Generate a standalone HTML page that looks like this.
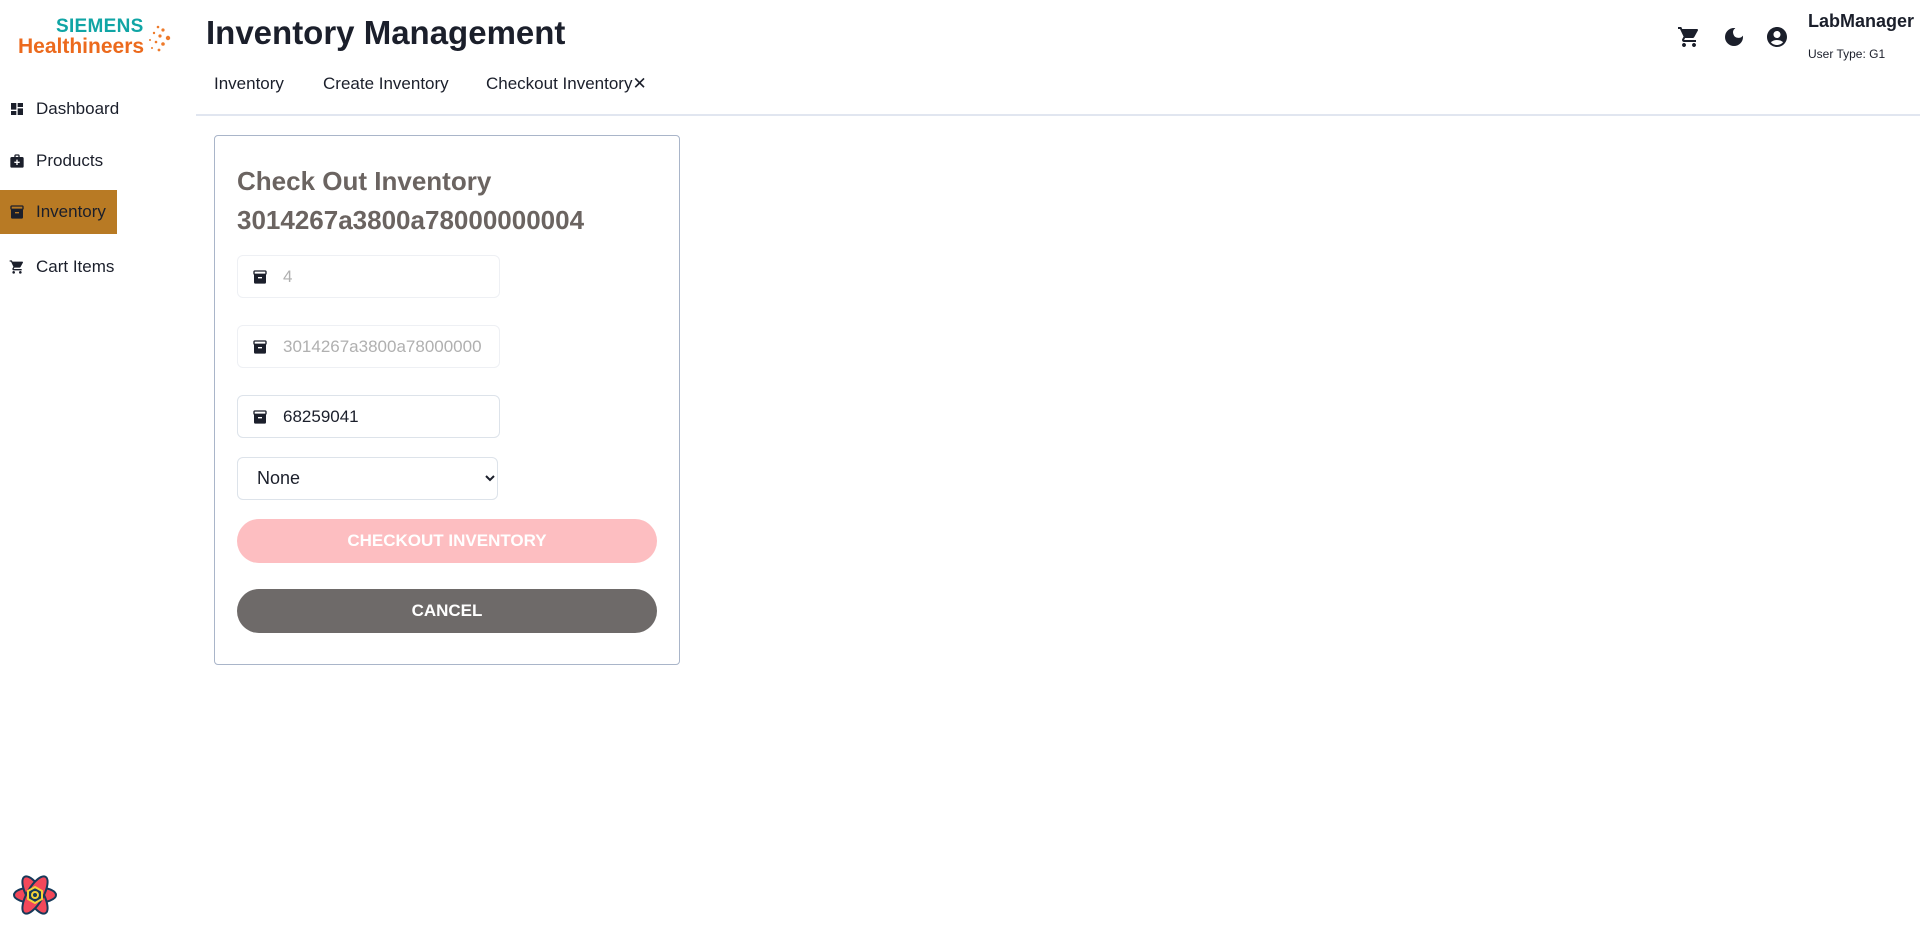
<!DOCTYPE html>
<html><head><meta charset="utf-8"><style>
*{box-sizing:border-box;margin:0;padding:0}
body{width:1920px;height:931px;background:#fff;font-family:"Liberation Sans",sans-serif;color:#1b1f2b;position:relative;overflow:hidden}
.abs{position:absolute}
.nav{position:absolute;left:0;height:44px;display:flex;align-items:center;font-size:17px;color:#1b1f2b}
.nav svg{margin-left:9px;margin-right:11px}
.tab{position:absolute;top:74px;font-size:17px;color:#1b1f2b}
.inp{position:absolute;left:237px;width:263px;height:43px;border:1px solid #eef0f4;border-radius:6px;display:flex;align-items:center;font-size:17px}
.inp svg{margin-left:14px;margin-right:15px}
.btn{position:absolute;left:237px;width:420px;height:44px;border-radius:22px;color:#fff;font-weight:bold;font-size:17px;display:flex;align-items:center;justify-content:center}
</style></head><body>
<div class="abs" style="left:56px;top:16px;font-weight:bold;font-size:19px;color:#10a5a5;letter-spacing:0.3px">SIEMENS</div>
<div class="abs" style="left:18px;top:35px;font-weight:bold;font-size:21px;color:#ec6a1d">Healthineers</div>
<svg class="abs" style="left:146px;top:24px" width="30" height="32" viewBox="0 0 30 32" fill="#ee7a2a">
<circle cx="12" cy="3" r="1.3"/><circle cx="17" cy="6" r="1.6"/><circle cx="8" cy="9" r="1.2"/><circle cx="14" cy="12" r="1.6"/><circle cx="22" cy="14" r="2.2"/><circle cx="4" cy="16" r="1"/><circle cx="10" cy="18" r="1.3"/><circle cx="17" cy="20" r="1.8"/><circle cx="6" cy="24" r="1"/><circle cx="13" cy="26" r="1.4"/>
</svg>
<div class="abs" style="left:206px;top:14px;font-weight:bold;font-size:33px;color:#1b1f2b">Inventory Management</div>
<div class="tab" style="left:214px">Inventory</div>
<div class="tab" style="left:323px">Create Inventory</div>
<div class="tab" style="left:486px">Checkout Inventory✕</div>
<div class="abs" style="left:196px;top:114px;right:0;height:2px;background:#e1e6f0"></div>

<div class="nav" style="top:87px"><svg width="16" height="16" viewBox="0 0 24 24" fill="#1b1f2b"><path d="M3 13h8V3H3zm0 8h8v-6H3zm10 0h8V11h-8zm0-18v6h8V3z"/></svg>Dashboard</div>
<div class="nav" style="top:139px"><svg width="16" height="16" viewBox="0 0 24 24" fill="#1b1f2b"><path d="M20 6h-4V4c0-1.1-.9-2-2-2h-4c-1.1 0-2 .9-2 2v2H4c-1.1 0-2 .9-2 2v12c0 1.1.9 2 2 2h16c1.1 0 2-.9 2-2V8c0-1.1-.9-2-2-2zM10 4h4v2h-4zm6 11h-3v3h-2v-3H8v-2h3v-3h2v3h3z"/></svg>Products</div>
<div class="nav" style="top:190px;width:117px;background:#b87a24"><svg width="16" height="16" viewBox="0 0 24 24" fill="#1b1f2b"><path d="M20 2H4c-1 0-2 .9-2 2v3.01c0 .72.43 1.34 1 1.69V20c0 1.1 1.1 2 2 2h14c.9 0 2-.9 2-2V8.7c.57-.35 1-.97 1-1.69V4c0-1.1-1-2-2-2zm-5 12H9v-2h6zm5-7H4V4h16z"/></svg>Inventory</div>
<div class="nav" style="top:245px"><svg width="16" height="16" viewBox="0 0 24 24" fill="#1b1f2b"><path d="M7 18c-1.1 0-1.99.9-1.99 2S5.9 22 7 22s2-.9 2-2-.9-2-2-2zM1 2v2h2l3.6 7.59-1.35 2.45c-.16.28-.25.61-.25.96 0 1.1.9 2 2 2h12v-2H7.42c-.14 0-.25-.11-.25-.25l.03-.12.9-1.630h7.45c.75 0 1.41-.41 1.75-1.03l3.58-6.49A1 1 0 0 0 20.01 4H5.21l-.94-2zm16 16c-1.1 0-1.99.9-1.99 2s.89 2 1.99 2 2-.9 2-2-.9-2-2-2z"/></svg>Cart Items</div>

<svg class="abs" style="left:1677px;top:25px" width="24" height="24" viewBox="0 0 24 24" fill="#1b1f2b"><path d="M7 18c-1.1 0-1.99.9-1.99 2S5.9 22 7 22s2-.9 2-2-.9-2-2-2zM1 2v2h2l3.6 7.59-1.35 2.45c-.16.28-.25.61-.25.96 0 1.1.9 2 2 2h12v-2H7.42c-.14 0-.25-.11-.25-.25l.03-.12.9-1.63h7.45c.75 0 1.41-.41 1.750-1.03l3.58-6.49A1 1 0 0 0 20.01 4H5.21l-.94-2zm16 16c-1.1 0-1.99.9-1.99 2s.89 2 1.99 2 2-.9 2-2-.9-2-2-2z"/></svg>
<svg class="abs" style="left:1722px;top:25px" width="24" height="24" viewBox="0 0 24 24" fill="#1b1f2b"><path d="M12 3a9 9 0 1 0 9 9c0-.46-.04-.92-.1-1.36a5.39 5.39 0 0 1-4.4 2.26 5.4 5.4 0 0 1-3.14-9.8c-.44-.06-.9-.1-1.36-.1z"/></svg>
<svg class="abs" style="left:1765px;top:25px" width="24" height="24" viewBox="0 0 24 24" fill="#1b1f2b"><path d="M12 2C6.48 2 2 6.48 2 12s4.48 10 10 10 10-4.48 10-10S17.52 2 12 2zm0 4c1.93 0 3.5 1.57 3.5 3.5S13.930 13 12 13s-3.5-1.57-3.5-3.5S10.07 6 12 6zm0 14c-2.03 0-4.43-.82-6.14-2.88a9.95 9.95 0 0 1 12.28 0C16.43 19.18 14.03 20 12 20z"/></svg>
<div class="abs" style="left:1808px;top:11px;font-weight:bold;font-size:18px">LabManager</div>
<div class="abs" style="left:1808px;top:47px;font-size:12px">User Type: G1</div>

<div class="abs" style="left:214px;top:135px;width:466px;height:530px;border:1px solid #a9b5c9;border-radius:4px"></div>
<div class="abs" style="left:237px;top:162px;font-weight:bold;font-size:26px;color:#6b6461;line-height:39px">Check Out Inventory<br>3014267a3800a78000000004</div>

<div class="inp" style="top:255px;color:#b0b0b0"><svg width="16" height="16" viewBox="0 0 24 24" fill="#1b1f2b"><path d="M20 2H4c-1 0-2 .9-2 2v3.01c0 .72.43 1.34 1 1.69V20c0 1.1 1.1 2 2 2h14c.9 0 2-.9 2-2V8.7c.57-.35 1-.97 1-1.69V4c0-1.1-1-2-2-2zm-5 12H9v-2h6zm5-7H4V4h16z"/></svg>4</div>
<div class="inp" style="top:325px;color:#b0b0b0"><svg width="16" height="16" viewBox="0 0 24 24" fill="#1b1f2b"><path d="M20 2H4c-1 0-2 .9-2 2v3.01c0 .72.43 1.34 1 1.69V20c0 1.1 1.1 2 2 2h14c.9 0 2-.9 2-2V8.7c.57-.35 1-.97 1-1.69V4c0-1.1-1-2-2-2zm-5 12H9v-2h6zm5-7H4V4h16z"/></svg>3014267a3800a78000000</div>
<div class="inp" style="top:395px;border-color:#dde3ea;color:#1b1f2b"><svg width="16" height="16" viewBox="0 0 24 24" fill="#1b1f2b"><path d="M20 2H4c-1 0-2 .9-2 2v3.01c0 .72.43 1.34 1 1.69V20c0 1.1 1.1 2 2 2h14c.9 0 2-.9 2-2V8.7c.57-.35 1-.97 1-1.69V4c0-1.1-1-2-2-2zm-5 12H9v-2h6zm5-7H4V4h16z"/></svg>68259041</div>
<div class="inp" style="top:457px;width:261px;border-color:#dde3ea;padding-left:19px;font-size:18px">None
<svg class="abs" style="left:232px;top:15px" width="12" height="10" viewBox="0 0 12 10"><path d="M2 3l4 4 4-4" stroke="#1b1f2b" stroke-width="2" fill="none"/></svg></div>

<div class="btn" style="top:519px;background:#fdbec1">CHECKOUT INVENTORY</div>
<div class="btn" style="top:589px;background:#6e6a69">CANCEL</div>

<svg class="abs" style="left:12px;top:872px" width="46" height="46" viewBox="0 0 46 46">
<g fill="#f2485a" stroke="#163a5a" stroke-width="2">
<ellipse cx="23" cy="23" rx="21" ry="8"/>
<ellipse cx="23" cy="23" rx="21" ry="8" transform="rotate(60 23 23)"/>
<ellipse cx="23" cy="23" rx="21" ry="8" transform="rotate(120 23 23)"/>
</g>
<polygon points="23,15 30,19 30,27 23,31 16,27 16,19" fill="#163a5a" stroke="#f4d23a" stroke-width="2"/>
<circle cx="23" cy="23" r="3" fill="none" stroke="#f4d23a" stroke-width="2"/>
</svg>
</body></html>
